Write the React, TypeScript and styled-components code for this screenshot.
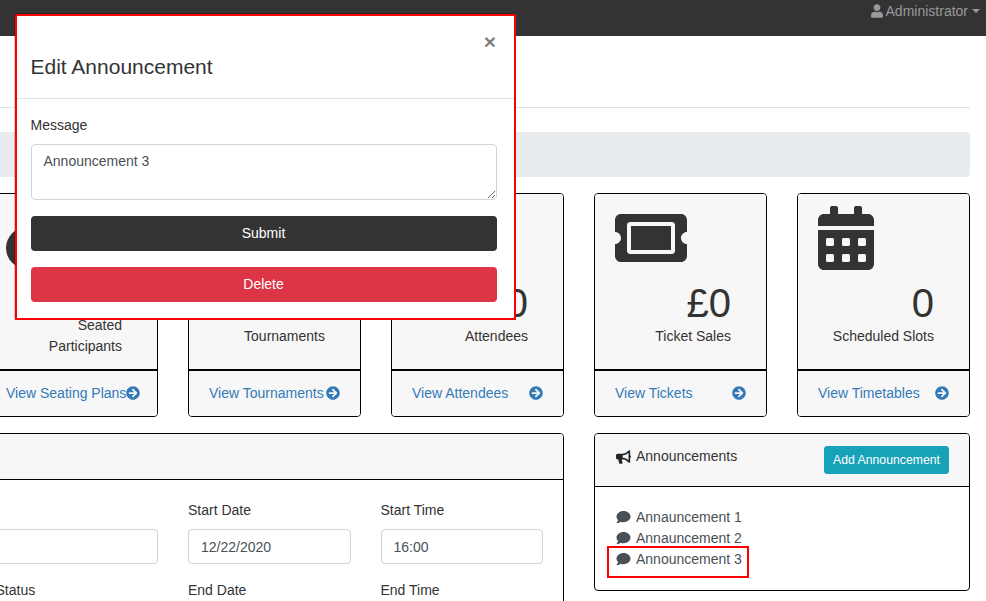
import styled, { createGlobalStyle } from "styled-components";
import {
  FaArrowCircleRight,
  FaBullhorn,
  FaCalendarAlt,
  FaComment,
  FaTicketAlt,
  FaUser,
} from "react-icons/fa";
import type { ReactNode } from "react";

const GlobalStyle = createGlobalStyle`
  html, body {
    margin: 0;
    height: 601px;
    overflow: hidden;
    background: #fff;
  }
  * { box-sizing: border-box; }
  body {
    font-family: "Liberation Sans", Arial, sans-serif;
    font-size: 14px;
    line-height: 21px;
    color: #333;
  }
`;

const Page = styled.div`
  position: relative;
  width: 986px;
  height: 601px;
  overflow: hidden;
`;

const NavBar = styled.nav`
  height: 36px;
  background: #333;
  display: flex;
  justify-content: flex-end;
  padding-right: 6px;
`;

const NavUser = styled.a`
  display: flex;
  align-items: center;
  height: 22px;
  color: #999;
  gap: 3px;
  svg { width: 12px; height: 14px; }
`;

const Caret = styled.span`
  margin-left: 1px;
  border-top: 4px solid #999;
  border-left: 4px solid transparent;
  border-right: 4px solid transparent;
`;

const Main = styled.main`
  width: 985px;
  margin-left: -15px;
`;

const PageHeader = styled.div`
  height: 72px;
  border-bottom: 1px solid #dee2e6;
`;

const Breadcrumb = styled.div`
  height: 45px;
  margin: 24px 0 16px;
  background: #e9ecef;
  border-radius: 4px;
`;

const Grid = styled.div`
  display: grid;
  grid-template-columns: repeat(5, 173px);
  column-gap: 30px;
  row-gap: 16px;
  align-items: start;
`;

const Card = styled.section<{ $span?: number }>`
  grid-column: span ${(p) => p.$span ?? 1};
  border: 1px solid #000;
  border-radius: 4px;
  overflow: hidden;
  background: #fff;
`;

const StatHeader = styled.div`
  height: 176px;
  padding: 12px 20px;
  background: #f7f7f7;
  border-bottom: 1px solid #000;
  display: flex;
  flex-direction: column;
`;

const IconSlot = styled.div<{ $width: number }>`
  height: 64px;
  flex-shrink: 0;
  svg {
    display: block;
    width: ${(p) => p.$width}px;
    height: 64px;
    color: #333;
  }
`;

const Stats = styled.div`
  flex: 1;
  display: flex;
  flex-direction: column;
  justify-content: center;
  text-align: right;
  padding-right: 15px;
`;

const Number = styled.div`
  font-size: 40px;
  line-height: 45px;
`;

const StatLabel = styled.div`
  white-space: pre-line;
`;

const StatFooter = styled.a`
  height: 46px;
  padding: 0 20px;
  background: #f7f7f7;
  border-top: 1px solid #000;
  display: flex;
  align-items: center;
  justify-content: space-between;
  color: #337ab7;
  white-space: nowrap;
  svg { width: 14px; height: 14px; flex-shrink: 0; margin-top: -1px; }
`;

const PanelHeader = styled.div`
  min-height: 46px;
  padding: 12px 20px;
  background: #f7f7f7;
  border-bottom: 1px solid #000;
  display: flex;
  justify-content: space-between;
  align-items: flex-start;
`;

const PanelTitle = styled.div`
  display: flex;
  align-items: center;
  gap: 5px;
  svg { width: 15px; height: 14px; margin-left: 1px; color: #212529; }
`;

const FormBody = styled.div`
  padding: 20px 20px 20px 9.5px;
  display: grid;
  grid-template-columns: repeat(3, 162.5px);
  column-gap: 30px;
  row-gap: 16px;
`;

const Field = styled.div`
  display: flex;
  flex-direction: column;
  gap: 8px;
`;

const Input = styled.input`
  width: 100%;
  height: 35px;
  padding: 6px 12px;
  font: inherit;
  color: #495057;
  background: #fff;
  border: 1px solid #ced4da;
  border-radius: 4px;
`;

const AddButton = styled.button`
  height: 28px;
  width: 125px;
  padding: 0;
  border: 1px solid #17a2b8;
  border-radius: 3px;
  background: #17a2b8;
  color: #fff;
  font: inherit;
  font-size: 12.25px;
`;

const AnnouncementList = styled.ul`
  list-style: none;
  margin: 0;
  padding: 20px 20px 20px 21px;
`;

const AnnouncementItem = styled.li<{ $marked?: boolean }>`
  position: relative;
  display: flex;
  align-items: center;
  gap: 5px;
  color: #495057;
  svg { width: 15px; height: 14px; margin-top: -2px; }
  ${(p) =>
    p.$marked &&
    `&::after {
      content: "";
      position: absolute;
      left: -9px;
      top: -3px;
      width: 138px;
      height: 28px;
      border: 2px solid #f00;
    }`}
`;

const Modal = styled.div`
  position: absolute;
  left: 15px;
  top: 14px;
  width: 501px;
  background: #fff;
  border: 2px solid #f00;
  box-shadow: -1px -1px 0 rgba(0, 0, 0, 0.2);
`;

const ModalHeader = styled.header`
  height: 83px;
  padding: 16px 18px 0 13.5px;
  border-bottom: 1px solid #dee2e6;
  display: flex;
  flex-direction: column;
`;

const CloseButton = styled.button`
  align-self: flex-end;
  height: 19px;
  padding: 0;
  border: 0;
  background: none;
  font: inherit;
  font-size: 21px;
  font-weight: 700;
  line-height: 20px;
  color: #000;
  opacity: 0.5;
`;

const ModalTitle = styled.h5`
  margin: 0;
  font-size: 21px;
  font-weight: 400;
  line-height: 31.5px;
`;

const ModalBody = styled.form`
  padding: 16px 17.5px 16px 13.5px;
  display: flex;
  flex-direction: column;
`;

const MessageLabel = styled.label`
  margin-bottom: 8px;
`;

const MessageBox = styled.textarea`
  display: block;
  width: 100%;
  height: 56px;
  padding: 6px 12px;
  margin-bottom: 16px;
  font: inherit;
  color: #495057;
  border: 1px solid #ced4da;
  border-radius: 4px;
`;

const ActionButton = styled.button<{ $danger?: boolean }>`
  height: 35px;
  padding: 0;
  border: 0;
  border-radius: 4px;
  font: inherit;
  color: #fff;
  background: ${(p) => (p.$danger ? "#dc3545" : "#333")};
  & + & { margin-top: 16px; }
`;

// only the left edge of this icon shows past the modal
const SeatIcon = () => (
  <svg viewBox="0 0 72 64">
    <circle cx="21" cy="42" r="21" fill="currentColor" />
    <circle cx="21" cy="42" r="7" fill="#f7f7f7" />
  </svg>
);

type Stat = {
  icon: ReactNode;
  iconWidth: number;
  value: string;
  label: string;
  link: string;
};

const stats: Stat[] = [
  { icon: <SeatIcon />, iconWidth: 72, value: "0", label: "Seated\nParticipants", link: "View Seating Plans" },
  { icon: <SeatIcon />, iconWidth: 72, value: "0", label: "Tournaments", link: "View Tournaments" },
  { icon: <SeatIcon />, iconWidth: 72, value: "0", label: "Attendees", link: "View Attendees" },
  { icon: <FaTicketAlt />, iconWidth: 72, value: "£0", label: "Ticket Sales", link: "View Tickets" },
  { icon: <FaCalendarAlt />, iconWidth: 56, value: "0", label: "Scheduled Slots", link: "View Timetables" },
];

const announcements = ["Annauncement 1", "Annauncement 2", "Announcement 3"];

const App = () => (
  <Page>
    <GlobalStyle />
    <NavBar>
      <NavUser>
        <FaUser />
        Administrator
        <Caret />
      </NavUser>
    </NavBar>
    <Main>
      <PageHeader />
      <Breadcrumb />
      <Grid>
        {stats.map((s) => (
          <Card key={s.link}>
            <StatHeader>
              <IconSlot $width={s.iconWidth}>{s.icon}</IconSlot>
              <Stats>
                <Number>{s.value}</Number>
                <StatLabel>{s.label}</StatLabel>
              </Stats>
            </StatHeader>
            <StatFooter>
              {s.link}
              <FaArrowCircleRight />
            </StatFooter>
          </Card>
        ))}
        <Card $span={3}>
          <PanelHeader />
          <FormBody>
            <Field>
              <label>&nbsp;</label>
              <Input readOnly value="" />
            </Field>
            <Field>
              <label>Start Date</label>
              <Input readOnly value="12/22/2020" />
            </Field>
            <Field>
              <label>Start Time</label>
              <Input readOnly value="16:00" />
            </Field>
            <Field>
              <label>Status</label>
            </Field>
            <Field>
              <label>End Date</label>
            </Field>
            <Field>
              <label>End Time</label>
            </Field>
          </FormBody>
        </Card>
        <Card $span={2}>
          <PanelHeader>
            <PanelTitle>
              <FaBullhorn />
              Announcements
            </PanelTitle>
            <AddButton>Add Announcement</AddButton>
          </PanelHeader>
          <AnnouncementList>
            {announcements.map((a, i) => (
              <AnnouncementItem key={a} $marked={i === 2}>
                <FaComment />
                {a}
              </AnnouncementItem>
            ))}
          </AnnouncementList>
        </Card>
      </Grid>
    </Main>
    <Modal>
      <ModalHeader>
        <CloseButton type="button">×</CloseButton>
        <ModalTitle>Edit Announcement</ModalTitle>
      </ModalHeader>
      <ModalBody>
        <MessageLabel>Message</MessageLabel>
        <MessageBox defaultValue="Announcement 3" />
        <ActionButton type="button">Submit</ActionButton>
        <ActionButton type="button" $danger>
          Delete
        </ActionButton>
      </ModalBody>
    </Modal>
  </Page>
);

export default App;
